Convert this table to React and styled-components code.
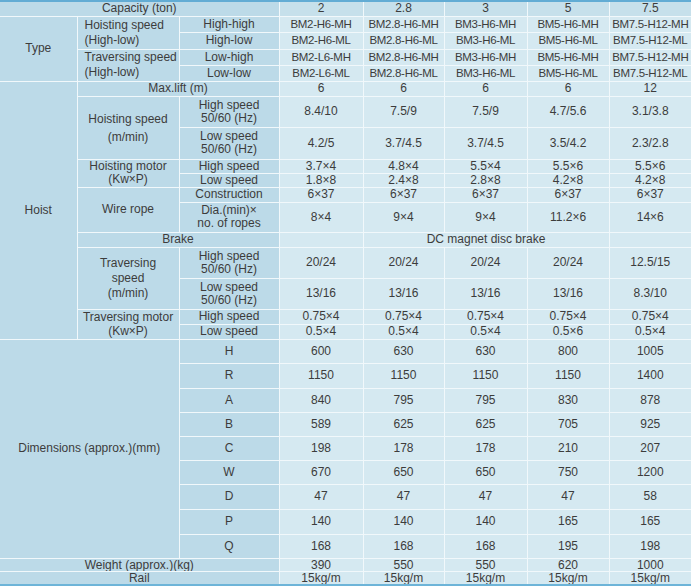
import React from 'react';
import styled, { createGlobalStyle } from 'styled-components';

const GlobalStyle = createGlobalStyle`
  html, body {
    margin: 0;
    padding: 0;
    background: #ffffff;
  }
  body {
    font-family: "Liberation Sans", Arial, sans-serif;
  }
`;

const Table = styled.table`
  width: 691px;
  border-collapse: collapse;
  table-layout: fixed;
  border-top: 2px solid #62acd4;
  border-bottom: 4px solid #6db4d8;
  border-left: hidden;
  border-right: hidden;
  font-size: 12px;
  color: #3c3c3c;
`;

const Row = styled.tr`
  height: ${(p) => p.h}px;
`;

const Cell = styled.td`
  padding: 0;
  border: 1px solid #f1f8fb;
  text-align: center;
  vertical-align: middle;
  white-space: nowrap;
  overflow: hidden;
  line-height: ${(p) => p.lh || 13}px;
`;

const Label = styled(Cell)`
  background: #bcdae8;
  text-align: ${(p) => (p.left ? 'left' : 'center')};
  padding-left: ${(p) => (p.left ? '7px' : '0')};
`;

const HeadValue = styled(Cell)`
  background: #c6e0eb;
`;

const Value = styled(Cell)`
  background: #d5e9f1;
`;

const Code = styled(Value)`
  font-size: 11.5px;
  letter-spacing: -0.3px;
`;

const caps = ['2', '2.8', '3', '5', '7.5'];

const codes = [
  ['BM2-H6-MH', 'BM2.8-H6-MH', 'BM3-H6-MH', 'BM5-H6-MH', 'BM7.5-H12-MH'],
  ['BM2-H6-ML', 'BM2.8-H6-ML', 'BM3-H6-ML', 'BM5-H6-ML', 'BM7.5-H12-ML'],
  ['BM2-L6-MH', 'BM2.8-H6-MH', 'BM3-H6-MH', 'BM5-H6-MH', 'BM7.5-H12-MH'],
  ['BM2-L6-ML', 'BM2.8-H6-ML', 'BM3-H6-ML', 'BM5-H6-ML', 'BM7.5-H12-ML'],
];
const codeLabels = ['High-high', 'High-low', 'Low-high', 'Low-low'];
const codeHeights = [16, 17, 16, 16];

const dims = [
  ['H', ['600', '630', '630', '800', '1005'], 24],
  ['R', ['1150', '1150', '1150', '1150', '1400'], 25],
  ['A', ['840', '795', '795', '830', '878'], 24],
  ['B', ['589', '625', '625', '705', '925'], 24],
  ['C', ['198', '178', '178', '210', '207'], 24],
  ['W', ['670', '650', '650', '750', '1200'], 24],
  ['D', ['47', '47', '47', '47', '58'], 25],
  ['P', ['140', '140', '140', '165', '165'], 25],
  ['Q', ['168', '168', '168', '195', '198'], 24],
];

const Values = ({ list, lh }) =>
  list.map((v, i) => (
    <Value key={i} lh={lh}>
      {v}
    </Value>
  ));

export default function App() {
  return (
    <>
      <GlobalStyle />
      <Table>
        <colgroup>
          <col style={{ width: 77 }} />
          <col style={{ width: 102 }} />
          <col style={{ width: 100 }} />
          <col style={{ width: 84 }} />
          <col style={{ width: 81 }} />
          <col style={{ width: 83 }} />
          <col style={{ width: 82 }} />
          <col style={{ width: 82 }} />
        </colgroup>
        <tbody>
          <Row h={15}>
            <Label colSpan={3}>Capacity (ton)</Label>
            {caps.map((c) => (
              <HeadValue key={c}>{c}</HeadValue>
            ))}
          </Row>

          {codes.map((row, i) => (
            <Row h={codeHeights[i]} key={i}>
              {i === 0 && <Label rowSpan={4}>Type</Label>}
              {i === 0 && (
                <Label rowSpan={2} left lh={15}>
                  Hoisting speed<br />(High-low)
                </Label>
              )}
              {i === 2 && (
                <Label rowSpan={2} left lh={15}>
                  Traversing speed<br />(High-low)
                </Label>
              )}
              <Label>{codeLabels[i]}</Label>
              {row.map((c, j) => (
                <Code key={j}>{c}</Code>
              ))}
            </Row>
          ))}

          <Row h={15}>
            <Label rowSpan={12}>Hoist</Label>
            <Label colSpan={2}>Max.lift (m)</Label>
            <Values list={['6', '6', '6', '6', '12']} />
          </Row>
          <Row h={31}>
            <Label rowSpan={2} lh={18}>
              Hoisting speed<br />(m/min)
            </Label>
            <Label>High speed<br />50/60 (Hz)</Label>
            <Values list={['8.4/10', '7.5/9', '7.5/9', '4.7/5.6', '3.1/3.8']} />
          </Row>
          <Row h={32}>
            <Label>Low speed<br />50/60 (Hz)</Label>
            <Values list={['4.2/5', '3.7/4.5', '3.7/4.5', '3.5/4.2', '2.3/2.8']} />
          </Row>
          <Row h={14}>
            <Label rowSpan={2} lh={13}>
              Hoisting motor<br />(Kw×P)
            </Label>
            <Label lh={12}>High speed</Label>
            <Values lh={12} list={['3.7×4', '4.8×4', '5.5×4', '5.5×6', '5.5×6']} />
          </Row>
          <Row h={14}>
            <Label lh={12}>Low speed</Label>
            <Values lh={12} list={['1.8×8', '2.4×8', '2.8×8', '4.2×8', '4.2×8']} />
          </Row>
          <Row h={15}>
            <Label rowSpan={2}>Wire rope</Label>
            <Label>Construction</Label>
            <Values list={['6×37', '6×37', '6×37', '6×37', '6×37']} />
          </Row>
          <Row h={30}>
            <Label>Dia.(min)×<br />no. of ropes</Label>
            <Values list={['8×4', '9×4', '9×4', '11.2×6', '14×6']} />
          </Row>
          <Row h={15}>
            <Label colSpan={2}>Brake</Label>
            <Value />
            <Value colSpan={3}>DC magnet disc brake</Value>
            <Value />
          </Row>
          <Row h={31}>
            <Label rowSpan={2} lh={15}>
              Traversing<br />speed<br />(m/min)
            </Label>
            <Label>High speed<br />50/60 (Hz)</Label>
            <Values list={['20/24', '20/24', '20/24', '20/24', '12.5/15']} />
          </Row>
          <Row h={31}>
            <Label>Low speed<br />50/60 (Hz)</Label>
            <Values list={['13/16', '13/16', '13/16', '13/16', '8.3/10']} />
          </Row>
          <Row h={15}>
            <Label rowSpan={2} lh={14}>
              Traversing motor<br />(Kw×P)
            </Label>
            <Label>High speed</Label>
            <Values list={['0.75×4', '0.75×4', '0.75×4', '0.75×4', '0.75×4']} />
          </Row>
          <Row h={15}>
            <Label>Low speed</Label>
            <Values list={['0.5×4', '0.5×4', '0.5×4', '0.5×6', '0.5×4']} />
          </Row>

          {dims.map(([k, list, h], i) => (
            <Row h={h} key={k}>
              {i === 0 && (
                <Label colSpan={2} rowSpan={9}>
                  Dimensions (approx.)(mm)
                </Label>
              )}
              <Label>{k}</Label>
              <Values list={list} />
            </Row>
          ))}

          <Row h={12}>
            <Label colSpan={3} lh={12}>Weight (approx.)(kg)</Label>
            <Values lh={12} list={['390', '550', '550', '620', '1000']} />
          </Row>
          <Row h={12}>
            <Label colSpan={3} lh={12}>Rail</Label>
            <Values lh={12} list={['15kg/m', '15kg/m', '15kg/m', '15kg/m', '15kg/m']} />
          </Row>
        </tbody>
      </Table>
    </>
  );
}
